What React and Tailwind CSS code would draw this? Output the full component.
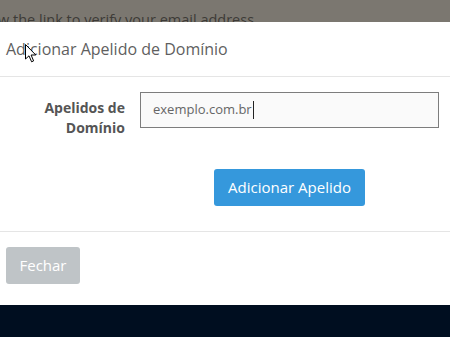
export default function App() {
  return (
    <div className="relative w-[450px] h-[337px] overflow-hidden bg-[#000e20] flex flex-col font-['Open_Sans',sans-serif]">
      {/* dimmed page behind the modal */}
      <div className="h-[22px] shrink-0 bg-[#7b7770] overflow-hidden">
        <p className="-ml-[2px] pt-[9px] text-[14.5px] leading-[22px] text-[#3d3b37] whitespace-nowrap">
          w the link to verify your email address
        </p>
      </div>

      {/* modal */}
      <div className="h-[283px] shrink-0 bg-white flex flex-col">
        <div className="h-[55px] flex items-center px-[6px] border-b border-[#e5e5e5]">
          <h4 className="text-[16px] text-[#5f5f5f] leading-none">Adicionar Apelido de Domínio</h4>
        </div>

        <div className="h-[155px] pt-[15px] border-b border-[#e5e5e5]">
          <div className="flex">
            <label className="w-[125px] pt-[6px] text-right text-[14px] leading-[20px] font-bold text-[#555]">
              Apelidos de
              <br />
              Domínio
            </label>
            <div className="ml-[15px] w-[299px] h-[36px] flex items-center px-[12px] bg-[#fafafa] border border-[#7d7d7d] text-[13px] text-[#666]">
              exemplo.com.br
              <span className="ml-[1px] w-px h-[18px] bg-[#222]" />
            </div>
          </div>
          <div className="flex pl-[214px] pt-[31px]">
            <button className="w-[151px] h-[37px] rounded-[3px] bg-[#3598dc] text-white text-[15px]">
              Adicionar Apelido
            </button>
          </div>
        </div>

        <div className="px-[6px] pt-[15px]">
          <button className="w-[74px] h-[37px] rounded-[3px] bg-[#bfc4c7] text-white text-[15px]">
            Fechar
          </button>
        </div>
      </div>

      {/* mouse pointer */}
      <svg className="absolute left-[25px] top-[44px]" width="12" height="19" viewBox="0 0 12 19">
        <path d="M0.5 0.5 L0.5 15 L4 11.8 L6.6 17.8 L8.6 16.9 L6.1 11 L10.8 11 Z" fill="white" stroke="black" strokeWidth="1" strokeLinejoin="round" />
      </svg>
    </div>
  );
}
